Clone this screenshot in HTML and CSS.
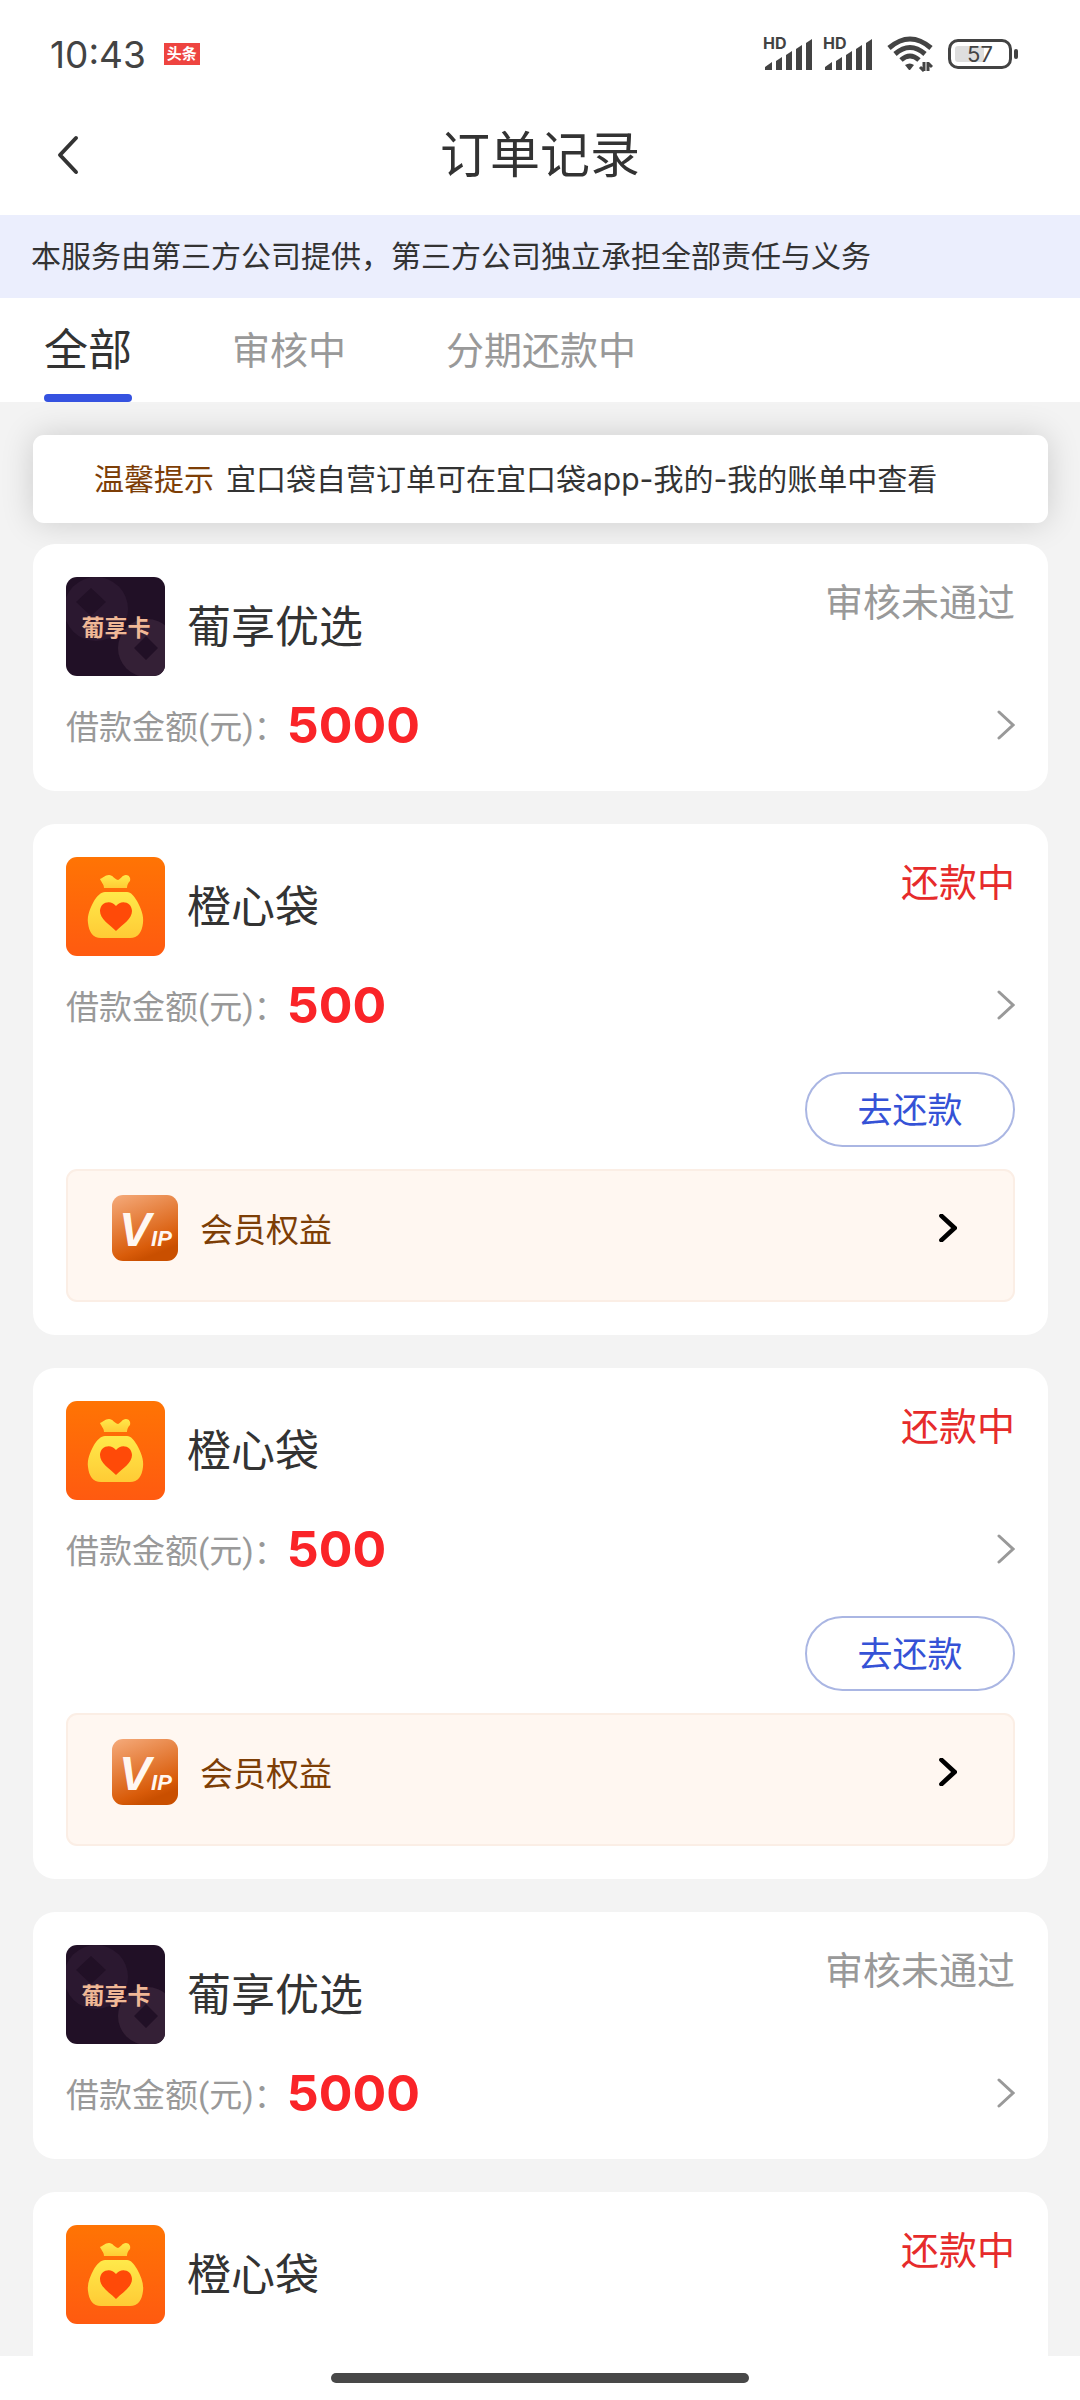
FILE: index.html
```html
<!DOCTYPE html>
<html lang="zh-CN">
  <head>
    <meta charset="UTF-8" />
    <meta name="viewport" content="width=device-width, initial-scale=1.0" />
    <link rel="stylesheet" href="styles.css">
    <title>订单记录</title>
  </head>
  <body>
    <!-- shared icons -->
    <svg class="sprite" width="0" height="0" aria-hidden="true">
      <defs>
        <linearGradient id="orange" x1="0" y1="0" x2="0" y2="1">
          <stop offset="0" stop-color="#ff7404" />
          <stop offset="1" stop-color="#ff5a10" />
        </linearGradient>
        <linearGradient id="gold" x1="0" y1="0" x2="0" y2="1">
          <stop offset="0" stop-color="#ffe94a" />
          <stop offset="1" stop-color="#ffcb35" />
        </linearGradient>
        <linearGradient id="copper" x1="0" y1="0" x2="0.4" y2="1">
          <stop offset="0" stop-color="#f5ab7c" />
          <stop offset="0.85" stop-color="#d95c0a" />
          <stop offset="1" stop-color="#c94f00" />
        </linearGradient>
      </defs>
      <symbol id="bars" viewBox="0 0 50 34">
        <path d="M2 30l7-5v8H2zM13 24l6-4v13h-6zM23 18l6-4v19h-6zM33 12l6-4v25h-6zM43 6l6-4v31h-6z" />
      </symbol>
      <symbol id="logo-card" viewBox="0 0 99 99">
        <rect width="99" height="99" fill="#211026" />
        <circle cx="30" cy="32" r="32" fill="#2b1830" />
        <circle cx="81" cy="71" r="29" fill="#342036" />
        <path d="M25 11l15 14-15 14-15-14zM80 59l12 12-12 12-12-12z" fill="#211026" />
      </symbol>
      <symbol id="logo-bag" viewBox="0 0 99 99">
        <rect width="99" height="99" fill="url(#orange)" />
        <path d="M38 31c0-4-3-6-4-9 3-1 5-4 9-4 4 0 5 4 9 5 3-1 4-5 8-5 3 0 5 3 4 6-2 2-3 4-3 7z" fill="url(#gold)" />
        <path d="M39 35h22c4 0 7 4 10 9 4 7 7 15 6 22-1 9-5 15-13 15H35c-8 0-12-6-13-15-1-7 2-15 6-22 3-5 7-9 11-9z" fill="url(#gold)" />
        <path d="M50 74C43 67 34 62 34 54c0-9 11-12 16-5 5-7 16-4 16 5 0 8-9 13-16 20z" fill="#ff4a08" />
      </symbol>
      <symbol id="vip" viewBox="0 0 66 66">
        <rect width="66" height="66" rx="11" fill="url(#copper)" />
      </symbol>
      <symbol id="arrow" viewBox="0 0 18 30">
        <path d="M2 2l14 13L2 28" fill="none" stroke="currentColor" stroke-linecap="round" />
      </symbol>
    </svg>

    <div class="status-bar">
      <span class="time">10:43</span>
      <span class="news-badge">头条</span>
      <div class="status-icons">
        <svg class="signal"><text x="0" y="12">HD</text><use href="#bars" /></svg>
        <svg class="signal"><text x="0" y="12">HD</text><use href="#bars" /></svg>
        <svg class="wifi" viewBox="0 0 46 36">
          <g fill="none" stroke="#434343" stroke-width="5">
            <path d="M2 12q21-18 42 0" />
            <path d="M8 18q15-13 30 0" />
            <path d="M14 24q9-8 18 0" />
          </g>
          <path d="M18 29q5-3 9 0l-4 5h-1z" fill="#434343" />
          <path d="M37 26v9M37 35l-4-4M41 35v-9M41 27l4 4" fill="none" stroke="#434343" stroke-width="3" />
        </svg>
        <div class="battery"><span>57</span></div>
      </div>
    </div>

    <header class="header">
      <button class="back" type="button" aria-label="返回">
        <svg viewBox="0 0 24 40"><path d="M20 3L4 20l16 17" /></svg>
      </button>
      <h1>订单记录</h1>
    </header>

    <p class="notice">本服务由第三方公司提供，第三方公司独立承担全部责任与义务</p>

    <nav class="tabs">
      <button class="tab active" type="button">全部</button>
      <button class="tab" type="button">审核中</button>
      <button class="tab" type="button">分期还款中</button>
    </nav>

    <main class="list">
      <p class="tip"><strong>温馨提示</strong><span>宜口袋自营订单可在宜口袋app-我的-我的账单中查看</span></p>

      <section class="card">
        <div class="card-top">
          <svg class="logo"><use href="#logo-card" /><text x="50" y="59">葡享卡</text></svg>
          <h2>葡享优选</h2>
          <span class="state">审核未通过</span>
        </div>
        <a class="amount" href="#">
          <span>借款金额(元)：</span><b>5000</b>
          <svg class="arrow"><use href="#arrow" /></svg>
        </a>
      </section>

      <section class="card">
        <div class="card-top">
          <svg class="logo"><use href="#logo-bag" /></svg>
          <h2>橙心袋</h2>
          <span class="state repaying">还款中</span>
        </div>
        <a class="amount" href="#">
          <span>借款金额(元)：</span><b>500</b>
          <svg class="arrow"><use href="#arrow" /></svg>
        </a>
        <button class="repay" type="button">去还款</button>
        <a class="member" href="#">
          <svg class="vip"><use href="#vip" /><text x="7" y="51">V<tspan class="ip">IP</tspan></text></svg>
          <span>会员权益</span>
          <svg class="arrow"><use href="#arrow" /></svg>
        </a>
      </section>

      <section class="card">
        <div class="card-top">
          <svg class="logo"><use href="#logo-bag" /></svg>
          <h2>橙心袋</h2>
          <span class="state repaying">还款中</span>
        </div>
        <a class="amount" href="#">
          <span>借款金额(元)：</span><b>500</b>
          <svg class="arrow"><use href="#arrow" /></svg>
        </a>
        <button class="repay" type="button">去还款</button>
        <a class="member" href="#">
          <svg class="vip"><use href="#vip" /><text x="7" y="51">V<tspan class="ip">IP</tspan></text></svg>
          <span>会员权益</span>
          <svg class="arrow"><use href="#arrow" /></svg>
        </a>
      </section>

      <section class="card">
        <div class="card-top">
          <svg class="logo"><use href="#logo-card" /><text x="50" y="59">葡享卡</text></svg>
          <h2>葡享优选</h2>
          <span class="state">审核未通过</span>
        </div>
        <a class="amount" href="#">
          <span>借款金额(元)：</span><b>5000</b>
          <svg class="arrow"><use href="#arrow" /></svg>
        </a>
      </section>

      <section class="card">
        <div class="card-top">
          <svg class="logo"><use href="#logo-bag" /></svg>
          <h2>橙心袋</h2>
          <span class="state repaying">还款中</span>
        </div>
      </section>
    </main>

    <div class="home-bar"><span></span></div>
  </body>
</html>
```

FILE: styles.css
```css
* {
  box-sizing: border-box;
}
body {
  --gap: 33px;
  margin: 0;
  height: 100vh;
  display: flex;
  flex-direction: column;
  background: #fff;
  color: #333;
  font-family: Inter, "Noto Sans CJK SC", sans-serif;
}
h1,
h2,
p {
  margin: 0;
  font-weight: 400;
}
button {
  padding: 0;
  border: 0;
  background: none;
  color: inherit;
  font-family: inherit;
}
a {
  color: inherit;
  text-decoration: none;
}
.sprite {
  position: absolute;
}

/* status bar */
.status-bar {
  flex: none;
  display: flex;
  align-items: center;
  height: 108px;
  padding: 0 68px 0 50px;
  color: #434343;
}
.time {
  font-size: 37px;
}
.news-badge {
  margin-left: 18px;
  padding: 0 3px;
  background: #ee4440;
  color: #fff;
  font-size: 15px;
  font-weight: 700;
  line-height: 22px;
}
.status-icons {
  display: flex;
  align-items: center;
  gap: 10px;
  margin-left: auto;
}
.signal {
  width: 50px;
  height: 34px;
  overflow: visible;
  fill: #434343;
  font-size: 16px;
  font-weight: 700;
}
.wifi {
  width: 46px;
  height: 36px;
  margin: 0 5px 0 4px;
}
.battery {
  position: relative;
  width: 64px;
  height: 30px;
  border: 3px solid #434343;
  border-radius: 10px;
  background: linear-gradient(90deg, #dedede 57%, #fff 57%);
  box-shadow: inset 0 0 0 4px #fff;
  font-size: 22px;
  line-height: 24px;
  text-align: center;
}
.battery::after {
  content: "";
  position: absolute;
  top: 7px;
  right: -9px;
  width: 4px;
  height: 10px;
  border-radius: 2px;
  background: #434343;
}

/* header */
.header {
  flex: none;
  display: grid;
  grid-template-columns: 1fr auto 1fr;
  align-items: center;
  height: 107px;
  padding: 0 56px 14px;
}
.header h1 {
  font-size: 50px;
  line-height: 60px;
}
.back {
  display: flex;
  width: 24px;
}
.back svg {
  width: 24px;
  height: 40px;
  fill: none;
  stroke: #333;
  stroke-width: 4;
  stroke-linecap: round;
  stroke-linejoin: round;
}
.notice {
  flex: none;
  padding: 0 31px;
  background: #ebeefd;
  font-size: 30px;
  line-height: 83px;
}

/* tabs */
.tabs {
  flex: none;
  display: flex;
  gap: 100px;
  height: 104px;
  padding: 0 44px;
}
.tab {
  border-bottom: 6px solid transparent;
  color: #999;
  font-size: 38px;
}
.tab.active {
  position: relative;
  color: #333;
  font-size: 44px;
}
.tab.active::after {
  content: "";
  position: absolute;
  left: 0;
  right: 0;
  bottom: -6px;
  height: 8px;
  border-radius: 4px;
  background: #3552e0;
}

/* order list */
.list {
  flex: 1;
  min-height: 0;
  overflow: hidden;
  padding: var(--gap) 32px 0 33px;
  background: #f3f3f3;
}
.tip {
  display: flex;
  gap: 12px;
  margin-bottom: 21px;
  padding: 0 61px;
  border-radius: 11px;
  background: #fff;
  box-shadow: 0 0 33px rgba(0, 0, 0, 0.16);
  font-size: 30px;
  line-height: 88px;
}
.tip strong {
  color: #7d3e06;
  font-weight: 400;
}
.card {
  position: relative;
  display: flex;
  flex-direction: column;
  margin-bottom: var(--gap);
  padding: var(--gap);
  border-radius: 22px;
  background: #fff;
}
.card:last-child {
  min-height: 247px;
}
.card-top {
  display: flex;
  align-items: center;
  gap: 22px;
}
.card-top h2 {
  font-size: 44px;
  line-height: 50px;
}
.logo {
  width: 99px;
  height: 99px;
  border-radius: 11px;
  fill: #f0b896;
  font-size: 23px;
  font-weight: 700;
  text-anchor: middle;
}
.state {
  align-self: flex-start;
  margin-left: auto;
  color: #999;
  font-size: 38px;
  line-height: 50px;
}
.state.repaying {
  color: #e62b2b;
}
.amount {
  display: flex;
  align-items: center;
  height: 66px;
  margin-top: 16px;
  color: #999;
  font-size: 33px;
}
.amount span {
  font-family: Roboto, "Noto Sans CJK SC", sans-serif;
}
.amount b {
  color: #fa2428;
  font-size: 50px;
}
.arrow {
  width: 18px;
  height: 30px;
  margin-left: auto;
  stroke-width: 3;
}
.repay {
  align-self: flex-end;
  width: 210px;
  height: 75px;
  margin-top: 34px;
  padding-bottom: 4px;
  border: 2px solid #aab6e3;
  border-radius: 38px;
  color: #3552d6;
  font-size: 35px;
}
.member {
  display: flex;
  align-items: center;
  gap: 22px;
  height: 133px;
  margin-top: 22px;
  padding: 0 56px 15px 44px;
  border: 2px solid #fbeee5;
  border-radius: 11px;
  background: #fff7f1;
  color: #7d3e06;
  font-size: 33px;
}
.member .arrow {
  height: 28px;
  color: #000;
  stroke-width: 5;
}
.vip {
  width: 66px;
  height: 66px;
  fill: #fff7f1;
  font-family: "Liberation Sans", Arial, sans-serif;
  font-size: 48px;
  font-style: italic;
  font-weight: 700;
}
.ip {
  font-size: 22px;
}

.home-bar {
  flex: none;
  display: flex;
  justify-content: center;
  height: 44px;
  padding-top: 17px;
}
.home-bar span {
  width: 418px;
  height: 10px;
  border-radius: 5px;
  background: #484848;
}
```
